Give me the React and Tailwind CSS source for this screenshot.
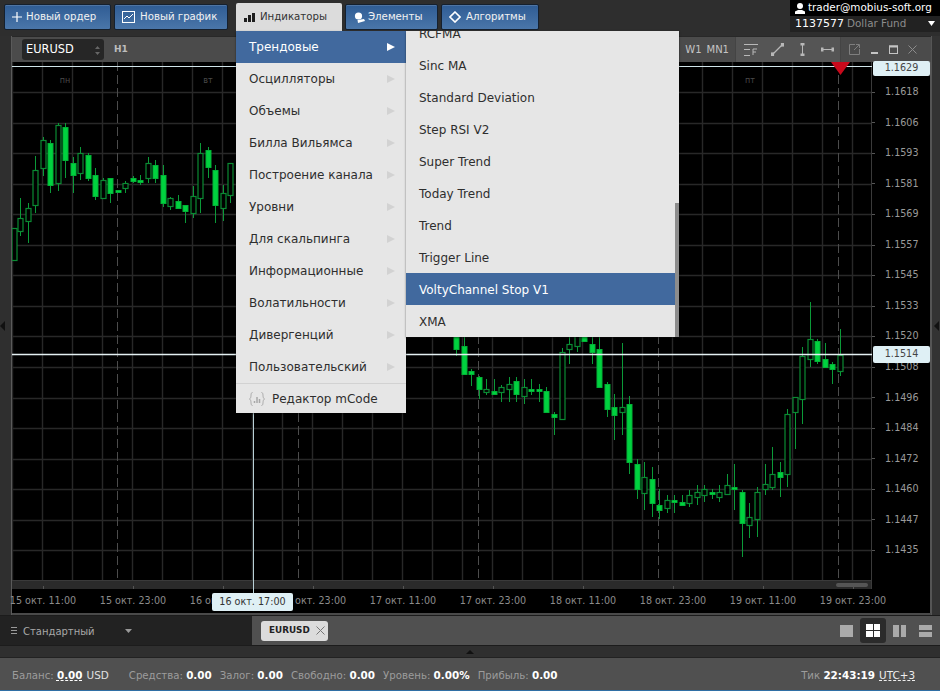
import React from "react";

const C = [
[14,228,260,228,260,0],[20,198,236,218,231,0],[27.5,203,243,208,221,0],[35,156,213,170,205,0],[42.5,137,176,140,168,0],[50,140,193,143,185,1],[57.7,123,191,125,183,0],[65,123,178,127,160,1],[72.7,157,193,163,175,1],[80,147,180,153,173,0],[87.7,153,181,155,178,1],[95,168,200,175,196,1],[102.7,178,198,180,198,0],[110,178,203,178,193,1],[117.7,190,192,190,192,1],[125,181,193,183,188,0],[132.7,176,183,178,181,1],[140,175,185,180,182,1],[147.7,157,183,163,178,0],[155,160,183,165,178,1],[162.7,165,207,175,203,1],[170,197,210,198,206,0],[177.7,195,209,201,208,1],[185,205,223,205,211,1],[192.7,186,218,196,213,0],[200,143,213,153,198,0],[207.7,147,178,150,167,1],[215,165,223,170,205,1],[222.7,185,221,193,208,0],[230,163,203,163,195,0],
[456,320,356,330,349,1],[463.7,320,374,346,374,1],[471,369,386,371,374,1],[478.7,376,399,377,389,1],[486,379,395,389,392,0],[493.7,379,394,391,394,1],[501,385,402,387,392,0],[508.7,377,402,384,389,0],[516,377,402,381,394,1],[523.7,379,404,387,396,0],[531,379,395,389,391,1],[538.7,384,402,389,391,1],[546,387,412,391,412,1],[553.7,412,435,414,417,1],[561.7,348,419,352,419,0],[569,330,364,344,349,0],[576.7,330,352,330,346,0],[584,330,341,330,341,1],[591.7,330,364,344,352,1],[599,330,388,349,387,1],[606.7,382,417,384,409,1],[614,394,440,407,415,1],[621.7,343,435,407,412,0],[629,396,474,404,462,1],[637,459,499,464,489,1],[644,462,510,477,493,0],[652,467,517,479,503,1],[659,489,519,505,510,1],[667,495,513,500,508,0],[674,495,513,500,502,1],[682,495,505,502,505,1],[689,490,507,495,503,0],[697,485,505,492,497,0],[704,485,502,489,495,0],[712,489,499,492,494,1],[719,485,502,492,497,0],[727,474,495,485,494,0],[734,464,510,487,489,1],[742,490,557,492,523,1],[749,503,538,517,525,0],[757,487,537,492,519,0],[765,464,495,484,489,0],[772,447,490,474,487,0],[780,462,497,472,477,1],[787,409,487,414,474,0],[795,397,449,397,412,0],[802,347,424,356,399,0],[810,302,367,339,359,0],[817,339,364,341,361,1],[825,343,367,359,367,1],[832,362,384,364,369,1],[840,329,376,355,371,0],
];
const prices = ["1.1618","1.1606","1.1593","1.1581","1.1569","1.1557","1.1545","1.1533","1.1520","1.1508","1.1496","1.1484","1.1472","1.1460","1.1447","1.1435"];
const times = ["15 окт. 11:00","15 окт. 23:00","16 окт. 11:00","16 окт. 23:00","17 окт. 11:00","17 окт. 23:00","18 окт. 11:00","18 окт. 23:00","19 окт. 11:00","19 окт. 23:00"];
const menu = ["Трендовые","Осцилляторы","Объемы","Билла Вильямса","Построение канала","Уровни","Для скальпинга","Информационные","Волатильности","Дивергенций","Пользовательский"];
const sub = ["Sinc MA","Standard Deviation","Step RSI V2","Super Trend","Today Trend","Trend","Trigger Line","VoltyChannel Stop V1","XMA"];
const range = (a, b, s) => { const r = []; for (let v = a; v <= b; v += s) r.push(v); return r; };

function Chart() {
  return (
    <svg className="block" width="860" height="518" viewBox="12 62 860 518">
      <rect x="12" y="62" width="860" height="518" fill="#000" />
      {range(12, 872, 30).map((x) => <line key={x} x1={x + 0.5} x2={x + 0.5} y1="62" y2="580" stroke="#282828" strokeWidth="1.4" />)}
      {range(0, 15, 1).map((i) => { const y = Math.round(92 + i * 30.55) + 0.5; return <line key={i} x1="12" x2="872" y1={y} y2={y} stroke="#282828" strokeWidth="1.4" />; })}
      {[117, 298, 478, 658, 838].map((x) => <line key={x} x1={x + 0.5} x2={x + 0.5} y1="62" y2="580" stroke="#4c4c4c" strokeDasharray="9 4" />)}
      {[[65,"пн"],[208,"вт"],[388,"ср"],[568,"чт"],[750,"пт"]].map(([x, t]) => (
        <text key={t} x={x} y="83" fill="#4a4a4a" fontSize="8" textAnchor="middle" fontFamily="DejaVu Sans, sans-serif">{t}</text>
      ))}
      {C.map(([x, wt, wb, bt, bb, f], i) => {
        const cx = Math.round(x) + 0.5;
        return (
          <g key={i}>
            <line x1={cx} x2={cx} y1={wt} y2={wb} stroke="#0b9a38" />
            {f ? <rect x={cx - 2.5} y={bt + 0.5} width="5" height={Math.max(bb - bt, 1)} fill="#00d23f" stroke="#02b236" />
               : <rect x={cx - 2.5} y={bt + 0.5} width="5" height={Math.max(bb - bt, 1)} fill="#000" stroke="#0a8a33" strokeWidth="1.2" />}
          </g>
        );
      })}
      <line x1="871.5" x2="871.5" y1="62" y2="580" stroke="#3a3a3a" />
      <line x1="12" x2="872" y1="66.5" y2="66.5" stroke="#cfe3e8" />
      <line x1="12" x2="872" y1="354.5" y2="354.5" stroke="#e4f0f2" strokeWidth="1.4" />
      <polygon points="831,62 850,62 840.5,75" fill="#c8091b" />
    </svg>
  );
}

const btn = "h-[26px] flex items-center rounded-[2px] border border-[#15202e] bg-gradient-to-b from-[#2f5c94] to-[#4a76a9] text-[#f2f2f2] text-[10.2px] shadow-[inset_0_1px_0_rgba(255,255,255,0.15)]";

function TopBar() {
  return (
    <div className="h-[36px] bg-[#2e2e2e] flex shrink-0 relative">
      <div className="flex pt-[4px] pl-[4px] items-start">
        <div className={`${btn} w-[107px] pl-[7px] gap-[4px]`}>
          <svg width="10" height="10" viewBox="0 0 10 10"><path d="M5 0v10M0 5h10" stroke="#fff" strokeWidth="1.2" /></svg>
          Новый ордер
        </div>
        <div className={`${btn} w-[114px] pl-[7px] ml-[3px] gap-[5px]`}>
          <svg width="13" height="12" viewBox="0 0 13 12" fill="none"><rect x="0.5" y="0.5" width="12" height="11" stroke="#fff" /><path d="M2 8l3-3 2 2 4-4" stroke="#fff" /></svg>
          Новый график
        </div>
        <div className="h-[28px] -mt-[1px] ml-[8px] w-[106px] bg-[#dcdcdc] flex items-center gap-[5px] pl-[8px] text-[10.2px] text-[#333] rounded-t-[2px]">
          <svg width="11" height="9" viewBox="0 0 11 9"><path d="M0 5h3v4H0zM4 2h3v7H4zM8 0h3v9H8z" fill="#1e1e1e" /></svg>
          Индикаторы
        </div>
        <div className={`${btn} w-[93px] pl-[8px] ml-[3px] gap-[3px]`}>
          <svg width="11" height="11" viewBox="0 0 11 11"><circle cx="4.500" cy="4" r="3.600" fill="#fff" /><path d="M3.500 8l6.500-1 1 2-7 2z" fill="#fff" /></svg>
          Элементы
        </div>
        <div className={`${btn} w-[98px] pl-[7px] ml-[3px] gap-[5px]`}>
          <svg width="12" height="12" viewBox="0 0 12 12" fill="none"><path d="M6 1l5 5-5 5-5-5z" stroke="#fff" strokeWidth="1.6" /></svg>
          Алгоритмы
        </div>
      </div>
      <div className="ml-auto w-[150px] h-[32px] flex flex-col text-[10.4px]">
        <div className="h-[16px] bg-black flex items-center pl-[5px] gap-[3px] text-white whitespace-nowrap">
          <svg width="10" height="11" viewBox="0 0 10 11"><circle cx="5" cy="3" r="3" fill="#fff" /><path d="M0 11V8.500L3 7h4l3 1.500V11z" fill="#fff" /></svg>
          trader@mobius-soft.org
        </div>
        <div className="h-[16px] bg-[#222] flex items-center pl-[5px] gap-[3px] whitespace-nowrap relative">
          <span className="text-white text-[11px]">1137577</span><span className="text-[#8c8c8c]">Dollar Fund</span>
          <svg className="absolute right-[5px] top-[5px]" width="7" height="5" viewBox="0 0 7 5"><path d="M0 0h7L3.500 5z" fill="#fff" /></svg>
        </div>
      </div>
    </div>
  );
}

function Header() {
  return (
    <div className="h-[26px] bg-[#4b4b4b] border-t border-[#282828] flex items-center relative text-[10px] shrink-0">
      <div className="ml-[10px] w-[82px] h-[21px] rounded-[3px] bg-[#262626] flex items-center justify-between pl-[4px] pr-[4px] pt-[1px] text-white text-[11.4px]">
        EURUSD
        <svg width="5" height="11" viewBox="0 0 5 11"><path d="M2.500 1L5 4H0zM2.500 10L0 7h5z" fill="#666" /></svg>
      </div>
      <span className="ml-[10px] text-[#bdbdbd] text-[9px] font-bold">H1</span>
      <div className="ml-auto flex items-center h-full text-[#c4c4c4] text-[10px]">
        <span className="mr-[5px]">W1</span>
        <span className="mr-[6px]">MN1</span>
        <div className="h-full w-[106px] bg-[#555] border-x border-[#444] flex items-center pl-[8px] gap-[13px]">
          <svg width="14" height="12" viewBox="0 0 14 12" fill="none" stroke="#b8b8b8"><path d="M0 .5h14M0 5.500h6M0 11.500h6" /><path d="M9 11V5h4M9 8h3" /></svg>
          <svg width="13" height="13" viewBox="0 0 13 13" fill="none" stroke="#b8b8b8" strokeWidth="1.2"><path d="M2 11L11 2" /><rect x="0" y="10" width="2.500" height="2.500" fill="#b8b8b8" /><rect x="10.500" y="0.500" width="2.500" height="2.500" fill="#b8b8b8" /></svg>
          <svg className="ml-[3px]" width="5" height="13" viewBox="0 0 5 13" fill="#b8b8b8"><rect x="2" y="1" width="1" height="11" /><rect x="0.500" y="0" width="4" height="2.500" /><rect x="0.500" y="10.500" width="4" height="2.500" /></svg>
          <svg className="ml-[3px]" width="13" height="5" viewBox="0 0 13 5" fill="#b8b8b8"><rect x="1" y="2" width="11" height="1" /><rect x="0" y="0.500" width="2.500" height="4" /><rect x="10.500" y="0.500" width="2.500" height="4" /></svg>
        </div>
        <div className="w-[90px] flex items-center pl-[8px] gap-[9px]">
          <svg width="11" height="11" viewBox="0 0 11 11" fill="none" stroke="#7f7f7f"><path d="M6 .5H.5v10h10V5" /><path d="M5 6l5-5M7 .5h3.500V4" /></svg>
          <svg className="ml-[1px]" width="9" height="9" viewBox="0 0 9 9"><rect x="1" y="7" width="7" height="2" fill="#c4c4c4" /></svg>
          <svg className="ml-[1px]" width="9" height="9" viewBox="0 0 9 9" fill="none" stroke="#c4c4c4"><rect x="0.500" y="1" width="8" height="7.500" /><path d="M0 1.500h9" strokeWidth="2" /></svg>
          <svg className="ml-[1px]" width="9" height="9" viewBox="0 0 9 9" stroke="#8c8c8c"><path d="M.5.5l8 8M8.500.5l-8 8" /></svg>
        </div>
      </div>
    </div>
  );
}

function ChartWindow() {
  return (
    <div className="h-[579px] flex shrink-0 bg-[#333]">
      <div className="w-[11px] flex items-center bg-[#2f2f2f]">
        <svg width="5" height="10" viewBox="0 0 5 10"><path d="M5 0v10L0 5z" fill="#111" /></svg>
      </div>
      <div className="flex-1 flex flex-col min-w-0 border-l border-[#5a5a5a]">
        <Header />
        <div className="flex flex-1 bg-black min-h-0 relative">
          <div className="w-[860px] flex flex-col shrink-0">
            <Chart />
            <div className="h-[9px] bg-[#2a2a2a] border-t border-[#3a3a3a] border-r flex justify-end items-center pr-[3px]">
              <div className="w-[32px] h-[4px] rounded-[2px] bg-[#555]" />
            </div>
            <div className="flex-1 flex items-start pt-[5px] text-[9.6px] text-[#8c8c8c]">
              {times.map((t) => (
                <div key={t} className="relative w-[90px] text-center whitespace-nowrap shrink-0 first:-ml-[14px]">
                  <span className="absolute left-1/2 -top-[8px] w-px h-[3px] bg-[#555]" />
                  {t}
                </div>
              ))}
            </div>
          </div>
          <div className="w-[58px] pt-[15px] text-[9.6px] text-[#9a9a9a] shrink-0">
            {prices.map((p) => (
              <div key={p} className="h-[30.55px] flex items-center">
                <span className="w-[3px] h-px bg-[#555] mr-[10px]" />
                {p}
              </div>
            ))}
          </div>
          <div className="w-[1px] bg-[#555]" />
        </div>
        <div className="h-[2px] bg-[#4a4a4a]" />
      </div>
      <div className="w-[9px] flex items-center justify-center bg-[#333] border-l border-[#555]">
        <svg width="5" height="10" viewBox="0 0 5 10"><path d="M5 0v10L0 5z" fill="#111" /></svg>
      </div>
    </div>
  );
}

function Tabs() {
  return (
    <div className="h-[29px] flex border-y border-[#1c1c1c] shrink-0 box-content">
      <div className="w-[252px] bg-[#222] flex items-center text-[10px] text-[#a0a0a0] pl-[11px]">
        <svg width="6" height="8" viewBox="0 0 6 8"><path d="M0 .5h6M0 3.500h6M0 6.500h6" stroke="#9a9a9a" /></svg>
        <span className="ml-[6px] w-[102px] text-[#a8a8a8] pt-[2px]">Стандартный</span>
        <svg width="7" height="4" viewBox="0 0 7 4"><path d="M0 0h7L3.500 4z" fill="#999" /></svg>
      </div>
      <div className="flex-1 bg-[#505050] flex items-center pl-[9px]">
        <div className="w-[67px] h-[20px] bg-[#dcdcdc] rounded-[3px] flex items-center pl-[8px] gap-[6px] text-[8.8px] font-bold text-[#222]">
          EURUSD
          <svg width="9" height="9" viewBox="0 0 9 9" stroke="#777"><path d="M.5.5l8 8M8.500.5l-8 8" /></svg>
        </div>
        <div className="ml-auto flex items-center pr-[8px]">
          <div className="w-[13px] h-[12px] bg-[#aaa] mr-[7px]" />
          <div className="w-[26px] h-[25px] rounded-[3px] bg-[#2b2b2b] grid grid-cols-2 gap-[1px] p-[6px]">
            <div className="bg-white" /><div className="bg-white" /><div className="bg-white" /><div className="bg-white" />
          </div>
          <div className="ml-[7px] w-[13px] h-[12px] grid grid-cols-2 gap-[2px]">
            <div className="bg-[#aaa]" /><div className="bg-[#aaa]" />
          </div>
          <div className="ml-[13px] w-[13px] h-[12px] grid grid-rows-2 gap-[2px]">
            <div className="bg-[#aaa]" /><div className="bg-[#aaa]" />
          </div>
        </div>
      </div>
    </div>
  );
}

const L = ({ k, v, cls = "" }) => (
  <span className={`whitespace-nowrap ${cls}`}>
    <span className="text-[#9c9c9c] text-[10.2px]">{k}: </span><span className="text-white font-bold text-[10.4px]">{v}</span>
  </span>
);

function Status() {
  return (
    <div className="flex-1 flex flex-col">
      <div className="h-[12px] bg-[#2f2f2f] flex justify-center items-center border-b border-[#222]">
        <svg width="8" height="4" viewBox="0 0 8 4"><path d="M4 0l4 4H0z" fill="#111" /></svg>
      </div>
      <div className="flex-1 bg-[#505050] border-b border-[#2f6fa5] flex items-center text-[10.4px] pl-[12px] pr-[25px] pt-[4px]">
        <span className="text-[#9c9c9c] text-[10.2px]">Баланс:&nbsp;</span>
        <span className="text-white font-bold underline decoration-dashed">0.00</span>
        <span className="text-[#e0e0e0] ml-[4px]">USD</span>
        <L k="Средства" v="0.00" cls="ml-[20px]" />
        <L k="Залог" v="0.00" cls="ml-[8px]" />
        <L k="Свободно" v="0.00" cls="ml-[8px]" />
        <L k="Уровень" v="0.00%" cls="ml-[8px]" />
        <L k="Прибыль" v="0.00" cls="ml-[8px]" />
        <span className="ml-auto text-[#9c9c9c] text-[10.2px]">Тик&nbsp;</span>
        <span className="text-white font-bold">22:43:19</span>
        <span className="ml-[4px] text-[#eee] underline decoration-dashed">UTC+3</span>
      </div>
    </div>
  );
}

function Menus() {
  return (
    <>
      <div className="absolute left-[236px] top-[31px] w-[170px] h-[382px] bg-[#e6e6e6] text-[12px] text-[#2e2e2e] flex flex-col shadow-[0_1px_2px_rgba(0,0,0,0.5)]">
        {menu.map((m, i) => (
          <div key={m} className={`h-[32px] shrink-0 flex items-center pl-[13px] pr-[11px] justify-between ${i === 0 ? "bg-[#41699e] text-white font-medium" : ""}`}>
            {m}
            <svg width="8" height="8" viewBox="0 0 8 8"><path d="M0 0l8 4-8 4z" fill={i === 0 ? "#fff" : "#d2d2d2"} /></svg>
          </div>
        ))}
        <div className="flex-1 border-t border-[#d2d2d2] flex items-center pl-[13px] gap-[7px]">
          <svg width="16" height="14" viewBox="0 0 16 14" fill="none" stroke="#a8a8a8"><path d="M3.500.5C1 .5 3 6 .5 7 3 8 1 13.500 3.500 13.500M12.500.5C15 .5 13 6 15.500 7 13 8 15 13.500 12.500 13.500" /><path d="M5.500 9v2M8 5v6M10.500 7v4" strokeWidth="1.5" /></svg>
          Редактор mCode
        </div>
      </div>
      <div className="absolute left-[406px] top-[31px] w-[273px] h-[306px] bg-[#e6e6e6] text-[12px] text-[#2e2e2e] overflow-hidden shadow-[0_1px_2px_rgba(0,0,0,0.5)]">
        <div className="-mt-[14px]">
          <div className="h-[32px] flex items-center pl-[13px] pt-[2px]">RCFMA</div>
          {sub.map((s) => (
            <div key={s} className={`h-[32px] flex items-center pl-[13px] pt-[2px] ${s.startsWith("Volty") ? "bg-[#41699e] text-white" : ""}`}>{s}</div>
          ))}
        </div>
        <div className="absolute right-0 top-[172px] bottom-0 w-[4px] bg-[#8c8c8c]" />
      </div>
    </>
  );
}

export default function App() {
  return (
    <div className="relative w-[940px] h-[691px] overflow-hidden bg-[#333] flex flex-col" style={{ fontFamily: '"DejaVu Sans", sans-serif' }}>
      <TopBar />
      <ChartWindow />
      <Tabs />
      <Status />
      <div className="absolute left-[253px] top-[62px] h-[532px] w-px bg-[#b8d0d6]" />
      <div className="absolute left-[212px] top-[593px] w-[81px] h-[18px] rounded-[2px] bg-[#dff0f5] text-[9.6px] text-[#333] flex items-center justify-center whitespace-nowrap">16 окт. 17:00</div>
      <div className="absolute left-[873px] top-[61px] w-[57px] h-[15px] rounded-[2px] bg-[#dff0f5] text-[9.6px] text-[#444] flex items-center justify-center">1.1629</div>
      <div className="absolute left-[873px] top-[346px] w-[57px] h-[17px] rounded-[2px] bg-[#dff0f5] text-[9.6px] text-[#444] flex items-center justify-center">1.1514</div>
      <Menus />
    </div>
  );
}
